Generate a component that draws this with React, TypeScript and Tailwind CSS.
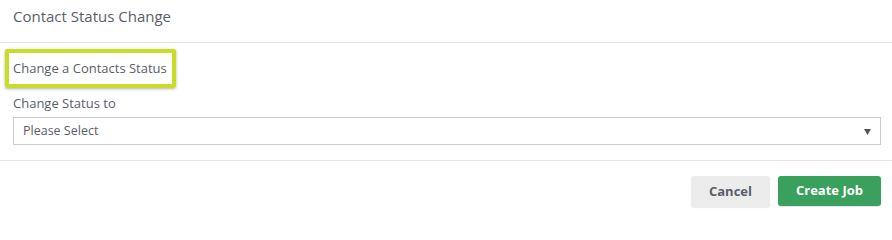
import React from 'react';

const font = { fontFamily: '"Open Sans", "Liberation Sans", sans-serif' };

const App: React.FC = () => {
  return (
    <div className="w-[892px] h-[222px] bg-white text-[#5b5e69]" style={font}>
      {/* Header */}
      <div className="h-[43px] flex items-center px-[13px] border-b border-[#e5e5e5]">
        <h2 className="text-[15px] leading-none pb-[9px] text-[#5b5e69]">Contact Status Change</h2>
      </div>

      {/* Body */}
      <div className="px-[13px] pt-[6px] pb-[15px] border-b border-[#e5e5e5]">
        <div className="-ml-[8px] w-[171px] h-[39px] border-4 border-[#c9dc27] rounded-[2px] shadow-[0_1px_3px_rgba(0,0,0,0.3)] flex items-center pl-[4px]">
          <span className="text-[13px] leading-none pb-[1px]">Change a Contacts Status</span>
        </div>
        <label className="block text-[13px] leading-none mt-[9px] mb-[7px]">Change Status to</label>
        <div className="w-[868px] h-[28px] border border-[#cccccc] flex items-center justify-between pl-[9px] pr-[9px]">
          <span className="text-[12.5px] leading-none">Please Select</span>
          <svg width="7" height="6" viewBox="0 0 7 6" className="mt-[2px]">
            <path d="M0 0 H7 L3.5 6 Z" fill="#555555" />
          </svg>
        </div>
      </div>

      {/* Footer */}
      <div className="flex justify-end gap-[8px] pr-[11px] pt-[15px]">
        <button className="w-[79px] h-[31px] rounded-[3px] bg-[#ececec] text-[#5b5e69] text-[13px] font-bold shadow-[0_1px_1px_rgba(0,0,0,0.08)]">
          Cancel
        </button>
        <button className="w-[103px] h-[30px] rounded-[3px] bg-[#3aa05e] text-white text-[13px] font-bold shadow-[0_1px_1px_rgba(0,0,0,0.1)]">
          Create Job
        </button>
      </div>
    </div>
  );
};

export default App;
